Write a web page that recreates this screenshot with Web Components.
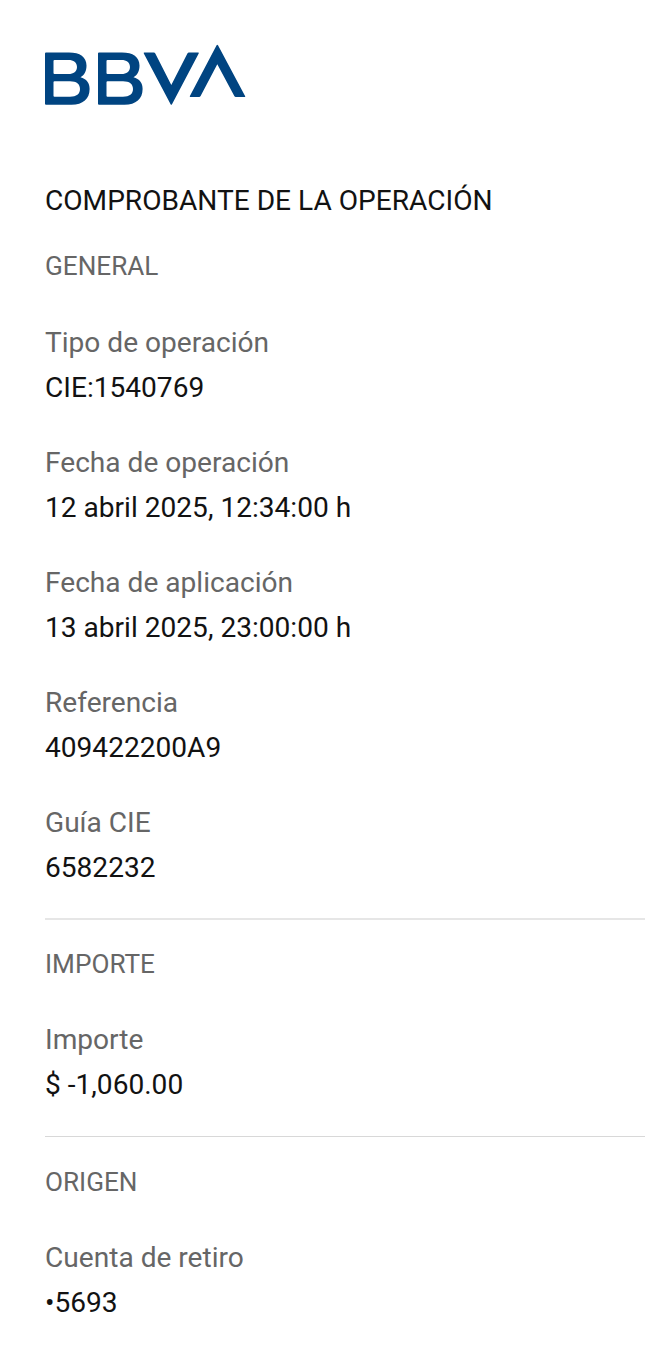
<!DOCTYPE html>
<html lang="es">
<head>
<meta charset="utf-8">
<title>Comprobante de la operación</title>
<style>
    body {
        margin: 0;
        background: #fff;
        font-family: Roboto, "Liberation Sans", sans-serif;
    }
</style>
</head>
<body>
<receipt-page>
    <bank-logo slot="logo"></bank-logo>
    <span slot="title">COMPROBANTE DE LA OPERACIÓN</span>
    <receipt-section name="GENERAL">
        <receipt-field label="Tipo de operación">CIE:1540769</receipt-field>
        <receipt-field label="Fecha de operación">12 abril 2025, 12:34:00 h</receipt-field>
        <receipt-field label="Fecha de aplicación">13 abril 2025, 23:00:00 h</receipt-field>
        <receipt-field label="Referencia">409422200A9</receipt-field>
        <receipt-field label="Guía CIE">6582232</receipt-field>
    </receipt-section>
    <receipt-section name="IMPORTE" divided>
        <receipt-field label="Importe">$ -1,060.00</receipt-field>
    </receipt-section>
    <receipt-section name="ORIGEN" divided>
        <receipt-field label="Cuenta de retiro">•5693</receipt-field>
    </receipt-section>
</receipt-page>

<script>
class BankLogo extends HTMLElement {
    constructor() {
        super();
        this.attachShadow({ mode: 'open' });
        this.shadowRoot.innerHTML = `
            <style>
                :host {
                    display: block;
                    width: 202px;
                    height: 62px;
                }
                svg {
                    display: block;
                }
            </style>
            <svg width="202" height="62" viewBox="0 0 202 62" fill="#004481" role="img" aria-label="BBVA">
                <path id="b" fill-rule="evenodd" d="M1 8.500H24C35 8.500 41.500 13 41.500 21.500C41.500 27 39.500 31 35.500 33.300C41.500 35 44.600 39 44.600 45C44.600 55 38 60.700 26.500 60.700H1Q0 60.700 0 59.700V9.500Q0 8.500 1 8.500ZM9.500 16Q8.500 16 8.500 17V29Q8.500 30 9.500 30H23.500C28.500 30 32 27.500 32 23C32 18.500 28.500 16 23.500 16ZM9.500 37.300Q8.500 37.300 8.500 38.300V51.700Q8.500 52.700 9.500 52.700H25C31.500 52.700 35 50 35 45C35 40 31.500 37.300 25 37.300Z"/>
                <use href="#b" x="53"/>
                <path d="M99.300 8.500H108.800Q109.800 8.500 110.300 9.400L126.300 41L142.400 9.400Q142.900 8.500 143.900 8.500H153.200Q154.200 8.500 153.700 9.400L127 60.300Q126.300 61.300 125.600 60.300L98.800 9.400Q98.400 8.500 99.300 8.500Z"/>
                <path d="M171.600 1.200Q172.300 .2 173 1.200L200.200 52.200Q200.600 53 199.700 53H190.800Q189.800 53 189.300 52.100L172.300 20.300L155.600 52.100Q155.100 53 154.100 53H145.400Q144.400 53 144.900 52.100Z"/>
            </svg>
        `;
    }
}

class ReceiptPage extends HTMLElement {
    constructor() {
        super();
        this.attachShadow({ mode: 'open' });
        this.shadowRoot.innerHTML = `
            <style>
                :host {
                    display: block;
                    box-sizing: border-box;
                    height: 1359px;
                    padding: 44px 16px 0 45px;
                }
                h1 {
                    margin: 79px 0 0;
                    font-size: 28.1px;
                    line-height: 32px;
                    font-weight: 400;
                    color: #121212;
                }
            </style>
            <slot name="logo"></slot>
            <h1><slot name="title"></slot></h1>
            <slot></slot>
        `;
    }
}

class ReceiptSection extends HTMLElement {
    constructor() {
        super();
        this.attachShadow({ mode: 'open' });
    }

    connectedCallback() {
        this.shadowRoot.innerHTML = `
            <style>
                :host {
                    display: block;
                    padding-top: 33px;
                }
                :host([divided]) {
                    margin-top: 28px;
                    padding-top: 28px;
                    border-top: 2px solid #e6e6e6;
                }
                :host([divided]:last-of-type) {
                    margin-top: 29px;
                    padding-top: 29px;
                    border-top: 1px solid #d8d8d8;
                }
                h2 {
                    margin: 0 0 38px;
                    font-size: 26.15px;
                    line-height: 32px;
                    font-weight: 400;
                    color: #666;
                }
                :host([divided]) h2 {
                    margin-bottom: 37px;
                }
                .fields {
                    display: flex;
                    flex-direction: column;
                    gap: 30px;
                }
            </style>
            <h2>${this.getAttribute('name')}</h2>
            <div class="fields"><slot></slot></div>
        `;
    }
}

class ReceiptField extends HTMLElement {
    constructor() {
        super();
        this.attachShadow({ mode: 'open' });
    }

    connectedCallback() {
        this.shadowRoot.innerHTML = `
            <style>
                :host {
                    display: block;
                    font-size: 28.1px;
                    line-height: 45px;
                    color: #121212;
                }
                .label {
                    color: #666;
                }
            </style>
            <div class="label">${this.getAttribute('label')}</div>
            <div class="value"><slot></slot></div>
        `;
    }
}

customElements.define('bank-logo', BankLogo);
customElements.define('receipt-page', ReceiptPage);
customElements.define('receipt-section', ReceiptSection);
customElements.define('receipt-field', ReceiptField);
</script>
</body>
</html>
